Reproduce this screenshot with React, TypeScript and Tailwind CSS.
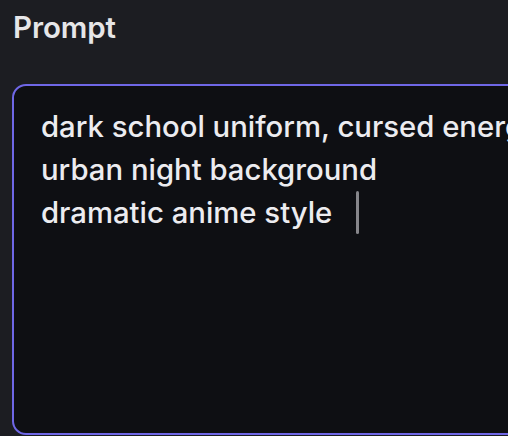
export default function App() {
  return (
    <div
      className="h-[436px] w-[508px] overflow-hidden bg-[#1c1d22] pl-3 pt-[10px]"
      style={{ fontFamily: 'Inter, "Noto Sans", sans-serif' }}
    >
      <div className="pl-[1px] text-[29.5px] leading-[34px] font-semibold tracking-[-0.1px] text-[#e6e6e8]">Prompt</div>
      <div className="mt-[40px] h-[351px] w-[560px] rounded-[14px] border-2 border-[#6f67e6] bg-[#0e0f13] pl-[27px] pt-[19px] text-[29.3px] leading-[43px] font-[450] text-[#ececf0]">
        <div className="whitespace-nowrap">dark school uniform, cursed energy,</div>
        <div className="whitespace-nowrap">urban night background</div>
        <div className="flex items-center whitespace-nowrap">
          <span>dramatic anime style</span>
          <span className="ml-[24px] inline-block h-[43px] w-[3px] rounded-sm bg-[#86868b]" />
        </div>
      </div>
    </div>
  );
}
